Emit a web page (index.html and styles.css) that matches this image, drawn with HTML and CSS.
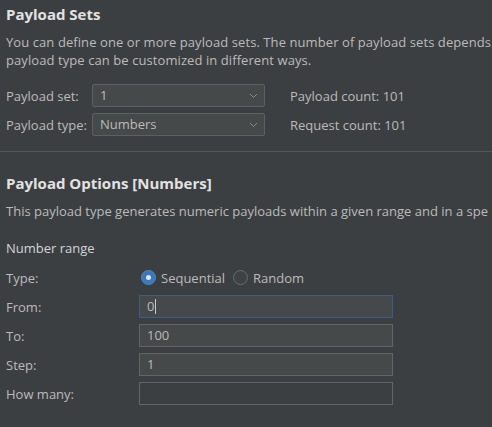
FILE: index.html
```html
<!DOCTYPE html>
<html>
<head>
<meta charset="utf-8">
<link rel="stylesheet" href="styles.css">
</head>
<body>
<section class="sets">
  <h1 class="title">Payload Sets</h1>
  <p class="desc"><span class="line">You can define one or more payload sets. The number of payload sets depends</span><span class="line">payload type can be customized in different ways.</span></p>
  <div class="set-grid">
    <span class="label">Payload set:</span>
    <div class="select"><span class="value">1</span><svg class="chev" width="9" height="6" viewBox="0 0 9 6"><path d="M1 1 L4.5 4.5 L8 1" fill="none" stroke="#8c8c8c" stroke-width="1"/></svg></div>
    <span class="count">Payload count: 101</span>
    <span class="label">Payload type:</span>
    <div class="select"><span class="value">Numbers</span><svg class="chev" width="9" height="6" viewBox="0 0 9 6"><path d="M1 1 L4.5 4.5 L8 1" fill="none" stroke="#8c8c8c" stroke-width="1"/></svg></div>
    <span class="count">Request count: 101</span>
  </div>
</section>
<hr class="divider">
<section class="options">
  <h1 class="title">Payload Options [Numbers]</h1>
  <p class="desc single">This payload type generates numeric payloads within a given range and in a spe</p>
  <h2 class="subtitle">Number range</h2>
  <div class="num-grid">
    <span class="label">Type:</span>
    <div class="radios">
      <span class="radio checked"></span><span class="radio-label">Sequential</span>
      <span class="radio"></span><span class="radio-label">Random</span>
    </div>
    <span class="label">From:</span>
    <div class="field focused"><span class="value">0</span><span class="caret"></span></div>
    <span class="label">To:</span>
    <div class="field"><span class="value">100</span></div>
    <span class="label">Step:</span>
    <div class="field"><span class="value">1</span></div>
    <span class="label">How many:</span>
    <div class="field empty"></div>
  </div>
</section>
</body>
</html>
```
FILE: styles.css
```css
html, body {
  margin: 0;
  padding: 0;
  background: #3c3f41;
  width: 492px;
  height: 427px;
  overflow: hidden;
}
body {
  font-family: "Open Sans", "Noto Sans", sans-serif;
  font-size: 13px;
  color: #bbbbbb;
}
.sets, .options {
  padding: 0 0 0 6px;
}
.title {
  margin: 0;
  font-size: 15px;
  font-weight: 700;
  line-height: 20px;
  color: #e2e2e2;
  white-space: nowrap;
}
.sets .title {
  padding-top: 4px;
}
.desc {
  margin: 9px 0 0 0;
  line-height: 18px;
}
.line {
  display: block;
  white-space: nowrap;
  letter-spacing: 0.08px;
}
.desc.single {
  margin-top: 9px;
  line-height: 18px;
  white-space: nowrap;
}
.set-grid {
  display: grid;
  grid-template-columns: 86px 173px auto;
  grid-auto-rows: 23px;
  row-gap: 6px;
  margin-top: 15px;
  align-items: center;
}
.count {
  padding-left: 25px;
  white-space: nowrap;
}
.label {
  white-space: nowrap;
}
.select {
  height: 23px;
  box-sizing: border-box;
  border: 1px solid #5e6060;
  border-radius: 2px;
  background: #45494a;
  display: flex;
  align-items: center;
  justify-content: space-between;
  padding: 0 6px 0 7px;
}
.value {
  line-height: 21px;
}
.chev {
  display: block;
}
.divider {
  margin: 15px 0 0 0;
  border: 0;
  height: 1px;
  background: #545657;
}
.options .title {
  margin-top: 21px;
}
.subtitle {
  margin: 18px 0 0 0;
  font-size: 13px;
  font-weight: 400;
  line-height: 20px;
  color: #d4d4d4;
}
.num-grid {
  display: grid;
  grid-template-columns: 133px 254px;
  grid-auto-rows: 23px;
  row-gap: 6px;
  margin-top: 8px;
  align-items: center;
}
.radios {
  display: flex;
  align-items: center;
  padding-left: 2px;
}
.radio {
  width: 15px;
  height: 15px;
  box-sizing: border-box;
  border-radius: 50%;
  border: 1px solid #6a6c6d;
  background: #3f4244;
  position: relative;
}
.radio.checked {
  background: #3d78b8;
  border-color: #4a88c7;
}
.radio.checked::after {
  content: "";
  position: absolute;
  left: 4px;
  top: 4px;
  width: 5px;
  height: 5px;
  border-radius: 50%;
  background: #dfe6ee;
}
.radio-label {
  margin-left: 5px;
  margin-right: 8px;
}
.field {
  height: 23px;
  box-sizing: border-box;
  border: 1px solid #646464;
  background: #45494a;
  display: flex;
  align-items: center;
  padding-left: 7px;
}
.field.focused {
  border-color: #3d5d82;
}
.field.empty {
  background: #3c3f41;
}
.caret {
  width: 1px;
  height: 15px;
  background: #c8c8c8;
  margin-left: 1px;
}
```
